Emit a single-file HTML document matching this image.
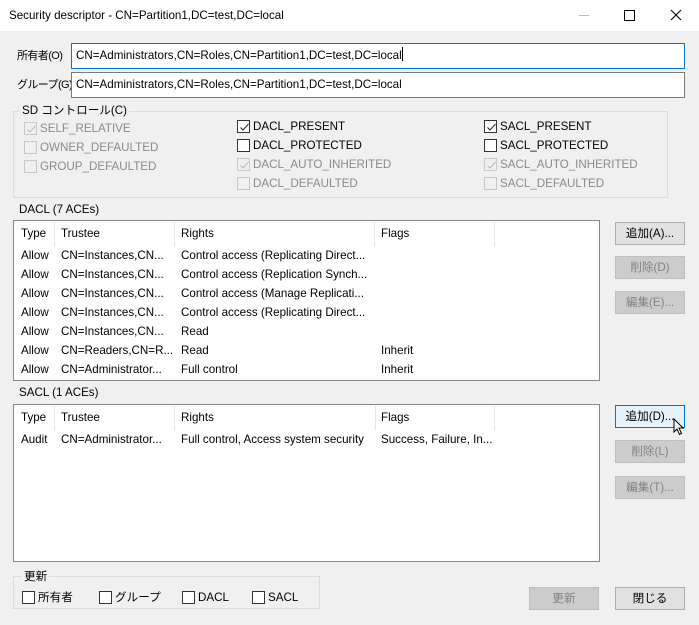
<!DOCTYPE html>
<html><head><meta charset="utf-8"><style>
*{margin:0;padding:0;box-sizing:border-box}
body{width:699px;height:625px;background:#f0f0f0;position:relative;overflow:hidden;font-family:"Liberation Sans","Noto Sans CJK JP",sans-serif;font-size:11.6px;color:#000}
.a{position:absolute;white-space:nowrap;line-height:14px}
.g{color:#8a8a8a}
.cb{position:absolute;width:13px;height:13px;border:1px solid #333;background:#fff}
.cb.d{border-color:#c8c8c8;background:#f0f0f0}
.cb svg{position:absolute;left:1px;top:1px}
.grp{position:absolute;border:1px solid #dcdcdc}
.lb{position:absolute;background:#fff;border:1px solid #828790}
.sep{position:absolute;top:1px;width:1px;height:24px;background:#e5e5e5}
.btn{position:absolute;width:70px;height:23px;border:1px solid #adadad;background:#e1e1e1;text-align:center;line-height:21px}
.btn.d{border-color:#bfbfbf;background:#cccccc;color:#838383}
.tb{position:absolute;left:71px;width:614px;height:26px;background:#fff;border:1px solid #7a7a7a;padding-left:4px;line-height:24px}
.lab{font-size:11px;letter-spacing:-0.6px}
</style></head><body>
<div style="position:absolute;left:0;top:0;width:699px;height:31px;background:#fff"></div>
<div class="a" style="left:9px;top:9px">Security descriptor - CN=Partition1,DC=test,DC=local</div>
<div style="position:absolute;left:579px;top:15px;width:10px;height:1px;background:#bbb"></div>
<div style="position:absolute;left:624px;top:10px;width:11px;height:11px;border:1px solid #000"></div>
<svg style="position:absolute;left:670px;top:9px" width="12" height="12"><path d="M1 1L11 11M11 1L1 11" stroke="#000" stroke-width="1.1"/></svg>

<div class="a lab" style="left:17px;top:49px">所有者(O)</div>
<div class="tb" style="top:43px;border-color:#0078d7">CN=Administrators,CN=Roles,CN=Partition1,DC=test,DC=local<span style="display:inline-block;width:1px;height:14px;background:#000;vertical-align:-2px"></span></div>
<div class="a lab" style="left:17px;top:78px">グループ(G)</div>
<div class="tb" style="top:72px">CN=Administrators,CN=Roles,CN=Partition1,DC=test,DC=local</div>

<div class="grp" style="left:13px;top:111px;width:655px;height:87px"></div>
<div class="a" style="left:20px;top:104px;background:#f0f0f0;padding:0 2px">SD コントロール(C)</div>

<div class="cb d" style="left:24px;top:122px"><svg width="11" height="11"><path d="M1.5 5.5L4 8L9.5 2" stroke="#bbb" fill="none"/></svg></div><div class="a g" style="left:40px;top:122px">SELF_RELATIVE</div>
<div class="cb d" style="left:24px;top:141px"></div><div class="a g" style="left:40px;top:141px">OWNER_DEFAULTED</div>
<div class="cb d" style="left:24px;top:160px"></div><div class="a g" style="left:40px;top:160px">GROUP_DEFAULTED</div>

<div class="cb" style="left:237px;top:120px"><svg width="11" height="11"><path d="M1.5 5.5L4 8L9.5 2" stroke="#222" fill="none"/></svg></div><div class="a" style="left:253px;top:120px">DACL_PRESENT</div>
<div class="cb" style="left:237px;top:139px"></div><div class="a" style="left:253px;top:139px">DACL_PROTECTED</div>
<div class="cb d" style="left:237px;top:158px"><svg width="11" height="11"><path d="M1.5 5.5L4 8L9.5 2" stroke="#bbb" fill="none"/></svg></div><div class="a g" style="left:253px;top:158px">DACL_AUTO_INHERITED</div>
<div class="cb d" style="left:237px;top:177px"></div><div class="a g" style="left:253px;top:177px">DACL_DEFAULTED</div>

<div class="cb" style="left:484px;top:120px"><svg width="11" height="11"><path d="M1.5 5.5L4 8L9.5 2" stroke="#222" fill="none"/></svg></div><div class="a" style="left:500px;top:120px">SACL_PRESENT</div>
<div class="cb" style="left:484px;top:139px"></div><div class="a" style="left:500px;top:139px">SACL_PROTECTED</div>
<div class="cb d" style="left:484px;top:158px"><svg width="11" height="11"><path d="M1.5 5.5L4 8L9.5 2" stroke="#bbb" fill="none"/></svg></div><div class="a g" style="left:500px;top:158px">SACL_AUTO_INHERITED</div>
<div class="cb d" style="left:484px;top:177px"></div><div class="a g" style="left:500px;top:177px">SACL_DEFAULTED</div>

<div class="a" style="left:19px;top:203px">DACL (7 ACEs)</div>
<div class="lb" style="left:13px;top:220px;width:587px;height:161px">
<div class="sep" style="left:40px"></div><div class="sep" style="left:160px"></div><div class="sep" style="left:360px"></div><div class="sep" style="left:480px"></div>
</div>
<div class="a" style="left:21px;top:227px">Type</div><div class="a" style="left:61px;top:227px">Trustee</div><div class="a" style="left:181px;top:227px">Rights</div><div class="a" style="left:381px;top:227px">Flags</div>
<div class="a" style="left:21px;top:249px">Allow</div><div class="a" style="left:61px;top:249px">CN=Instances,CN...</div><div class="a" style="left:181px;top:249px">Control access (Replicating Direct...</div>
<div class="a" style="left:21px;top:268px">Allow</div><div class="a" style="left:61px;top:268px">CN=Instances,CN...</div><div class="a" style="left:181px;top:268px">Control access (Replication Synch...</div>
<div class="a" style="left:21px;top:287px">Allow</div><div class="a" style="left:61px;top:287px">CN=Instances,CN...</div><div class="a" style="left:181px;top:287px">Control access (Manage Replicati...</div>
<div class="a" style="left:21px;top:306px">Allow</div><div class="a" style="left:61px;top:306px">CN=Instances,CN...</div><div class="a" style="left:181px;top:306px">Control access (Replicating Direct...</div>
<div class="a" style="left:21px;top:325px">Allow</div><div class="a" style="left:61px;top:325px">CN=Instances,CN...</div><div class="a" style="left:181px;top:325px">Read</div>
<div class="a" style="left:21px;top:344px">Allow</div><div class="a" style="left:61px;top:344px">CN=Readers,CN=R...</div><div class="a" style="left:181px;top:344px">Read</div><div class="a" style="left:381px;top:344px">Inherit</div>
<div class="a" style="left:21px;top:363px">Allow</div><div class="a" style="left:61px;top:363px">CN=Administrator...</div><div class="a" style="left:181px;top:363px">Full control</div><div class="a" style="left:381px;top:363px">Inherit</div>

<div class="btn" style="left:615px;top:222px">追加(A)...</div>
<div class="btn d" style="left:615px;top:256px">削除(D)</div>
<div class="btn d" style="left:615px;top:291px">編集(E)...</div>

<div class="a" style="left:19px;top:386px">SACL (1 ACEs)</div>
<div class="lb" style="left:13px;top:404px;width:587px;height:158px">
<div class="sep" style="left:40px"></div><div class="sep" style="left:160px"></div><div class="sep" style="left:361px"></div><div class="sep" style="left:480px"></div>
</div>
<div class="a" style="left:21px;top:411px">Type</div><div class="a" style="left:61px;top:411px">Trustee</div><div class="a" style="left:181px;top:411px">Rights</div><div class="a" style="left:381px;top:411px">Flags</div>
<div class="a" style="left:21px;top:433px">Audit</div><div class="a" style="left:61px;top:433px">CN=Administrator...</div><div class="a" style="left:181px;top:433px">Full control, Access system security</div><div class="a" style="left:381px;top:433px">Success, Failure, In...</div>

<div class="btn" style="left:615px;top:405px;border-color:#0078d7;background:#e5f1fb">追加(D)...</div>
<svg style="position:absolute;left:673px;top:418px" width="11" height="18"><path d="M1 1L1 14L4 11L6.5 16.5L8.5 15.5L6 10L10 10Z" fill="#fff" stroke="#000" stroke-width="1"/></svg>
<div class="btn d" style="left:615px;top:440px">削除(L)</div>
<div class="btn d" style="left:615px;top:476px">編集(T)...</div>

<div class="grp" style="left:13px;top:576px;width:307px;height:33px"></div>
<div class="a" style="left:22px;top:570px;background:#f0f0f0;padding:0 2px">更新</div>
<div class="cb" style="left:22px;top:591px"></div><div class="a" style="left:38px;top:591px">所有者</div>
<div class="cb" style="left:99px;top:591px"></div><div class="a" style="left:115px;top:591px">グループ</div>
<div class="cb" style="left:182px;top:591px"></div><div class="a" style="left:198px;top:591px">DACL</div>
<div class="cb" style="left:252px;top:591px"></div><div class="a" style="left:268px;top:591px">SACL</div>

<div class="btn d" style="left:529px;top:587px">更新</div>
<div class="btn" style="left:615px;top:587px">閉じる</div>
</body></html>
